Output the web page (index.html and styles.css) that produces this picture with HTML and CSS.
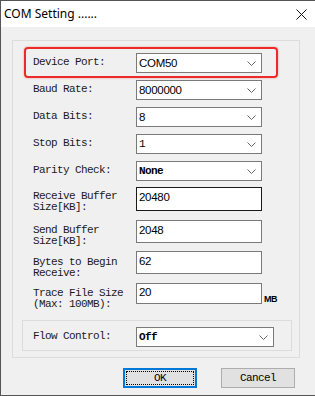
FILE: index.html
```html
<!DOCTYPE html>
<html lang="en">
<head>
<meta charset="UTF-8">
<title>COM Setting</title>
<link rel="stylesheet" href="styles.css">
</head>
<body>
  <div class="window">
    <div class="titlebar">
      <span class="title">COM Setting ......</span>
      <svg class="close" width="11" height="11" viewBox="0 0 11 11"><path d="M0.5 0.5 L10.5 10.5 M10.5 0.5 L0.5 10.5" stroke="#111" stroke-width="1" fill="none"/></svg>
    </div>

    <div class="client">
      <div class="group">
        <div class="row highlight">
          <span class="label">Device Port:</span>
          <div class="combo"><span class="value">COM50</span><svg class="arrow" width="9" height="5" viewBox="0 0 9 5"><polyline points="0.5,0.5 4.5,4.5 8.5,0.5" stroke="#666" fill="none"/></svg></div>
        </div>
        <div class="row baud">
          <span class="label">Baud Rate:</span>
          <div class="combo"><span class="value">8000000</span><svg class="arrow" width="9" height="5" viewBox="0 0 9 5"><polyline points="0.5,0.5 4.5,4.5 8.5,0.5" stroke="#666" fill="none"/></svg></div>
        </div>
        <div class="row">
          <span class="label">Data Bits:</span>
          <div class="combo"><span class="value">8</span><svg class="arrow" width="9" height="5" viewBox="0 0 9 5"><polyline points="0.5,0.5 4.5,4.5 8.5,0.5" stroke="#666" fill="none"/></svg></div>
        </div>
        <div class="row">
          <span class="label">Stop Bits:</span>
          <div class="combo"><span class="value mono">1</span><svg class="arrow" width="9" height="5" viewBox="0 0 9 5"><polyline points="0.5,0.5 4.5,4.5 8.5,0.5" stroke="#666" fill="none"/></svg></div>
        </div>
        <div class="row">
          <span class="label">Parity Check:</span>
          <div class="combo"><span class="value mono bold">None</span><svg class="arrow" width="9" height="5" viewBox="0 0 9 5"><polyline points="0.5,0.5 4.5,4.5 8.5,0.5" stroke="#666" fill="none"/></svg></div>
        </div>

        <!-- 入力欄 -->
        <div class="row two recv">
          <span class="label">Receive Buffer<br>Size[KB]:</span>
          <div class="edit focus"><span class="value">20480</span></div>
        </div>
        <div class="row two send">
          <span class="label">Send Buffer<br>Size[KB]:</span>
          <div class="edit"><span class="value">2048</span></div>
        </div>
        <div class="row two bytes">
          <span class="label">Bytes to Begin<br>Receive:</span>
          <div class="edit"><span class="value">62</span></div>
        </div>
        <div class="row two trace">
          <span class="label">Trace File Size<br>(Max: 100MB):</span>
          <div class="edit short"><span class="value">20</span></div>
          <span class="unit">MB</span>
        </div>

        <div class="subgroup">
          <div class="row flow">
            <span class="label">Flow Control:</span>
            <div class="combo wide"><span class="value mono bold">Off</span><svg class="arrow" width="9" height="5" viewBox="0 0 9 5"><polyline points="0.5,0.5 4.5,4.5 8.5,0.5" stroke="#666" fill="none"/></svg></div>
          </div>
        </div>
      </div>

      <div class="buttons">
        <div class="button default"><span class="focus-rect">OK</span></div>
        <div class="button">Cancel</div>
      </div>
    </div>
  </div>
</body>
</html>
```

FILE: styles.css
```css
body {
  margin: 0;
  background: #f0f0f0;
  font-family: "Liberation Mono", monospace;
  font-size: 11px;
  line-height: 11px;
  overflow: hidden;
}

.window {
  width: 314px;
  height: 394px;
  border: 1px solid #555;
  border-right: none;
  background: #f0f0f0;
  display: flex;
  flex-direction: column;
}

.titlebar {
  height: 26px;
  flex: none;
  background: #fff;
  display: flex;
  align-items: center;
  justify-content: space-between;
  padding: 0 8px 0 3px;
}

.title {
  font-family: "Noto Sans", sans-serif;
  font-size: 12px;
  line-height: 16px;
  color: #000;
}

.close {
  display: block;
  margin-top: 1px;
}

.client {
  padding: 13px 0 0 11px;
}

/* グループ枠 */
.group {
  width: 286px;
  border: 1px solid #dcdcdc;
  padding: 6px 0 6px 0;
}

.row {
  display: grid;
  grid-template-columns: 103px 126px auto;
  align-items: center;
  margin: 7px 0 0 11px;
  padding-left: 9px;
}

.label {
  font-family: "Liberation Mono", monospace;
  font-size: 11px;
  letter-spacing: -0.6px;
  line-height: 11px;
  color: #1a1a1a;
  margin-top: -1px;
}

.row.highlight {
  width: 229px;
  margin-top: 0;
  border: 2px solid #ec2a2a;
  border-radius: 4px;
  padding: 4px 14px 3px 7px;
  box-shadow: 0 0 2px rgba(236, 42, 42, 0.5);
}

.row.baud { margin-top: 2px; }
.row.recv { margin-top: 6px; }
.row.send { margin-top: 9px; }
.row.bytes { margin-top: 8px; }
.row.trace { margin-top: 9px; }

.row.two { align-items: start; }
.row.two .label { margin: 4px 0 -12px 0; }
.row.send .label { margin-top: 5px; }
.row.bytes .label { margin-top: 6px; }
.row.trace .label { margin-top: 5px; }

.combo,
.edit {
  box-sizing: border-box;
  height: 20px;
  background: #fff;
  border: 1px solid #7a7a7a;
  display: flex;
  align-items: center;
  justify-content: space-between;
  padding: 0 5px 0 2px;
}

.edit { height: 23px; align-items: flex-start; padding-top: 3px; }
.edit.focus { height: 24px; border-color: #1a1a1a; }
.edit.short { height: 21px; padding-top: 2px; }

.value {
  font-family: "Liberation Sans", sans-serif;
  font-size: 11.5px;
  line-height: 13px;
  letter-spacing: -0.3px;
  color: #000;
}

.value.mono {
  font-family: "Liberation Mono", monospace;
  font-size: 11px;
  letter-spacing: -0.6px;
}

.value.bold { font-weight: bold; }

.arrow { display: block; }

.unit {
  align-self: end;
  margin: 0 0 0 2px;
  font-family: "Liberation Sans", sans-serif;
  font-size: 9px;
  line-height: 10px;
  font-weight: bold;
  letter-spacing: -0.6px;
}

.subgroup {
  width: 268px;
  margin: 16px 0 0 9px;
  border: 1px solid #dcdcdc;
  padding: 6px 0 3px 0;
}

.row.flow {
  grid-template-columns: 103px 138px;
  margin: 0 0 0 1px;
}

.buttons {
  display: flex;
  justify-content: flex-end;
  gap: 24px;
  margin-top: 10px;
  padding-right: 20px;
}

.button {
  box-sizing: border-box;
  width: 74px;
  height: 20px;
  background: #e1e1e1;
  border: 1px solid #adadad;
  display: flex;
  align-items: center;
  justify-content: center;
  font-size: 11px;
  letter-spacing: -0.6px;
}

.button.default {
  border: 1px solid #0078d7;
  box-shadow: inset 0 0 0 1px #0078d7;
  padding: 2px;
}

.focus-rect {
  flex: 1;
  align-self: stretch;
  display: flex;
  align-items: center;
  justify-content: center;
  border: 1px dotted #000;
}
```
